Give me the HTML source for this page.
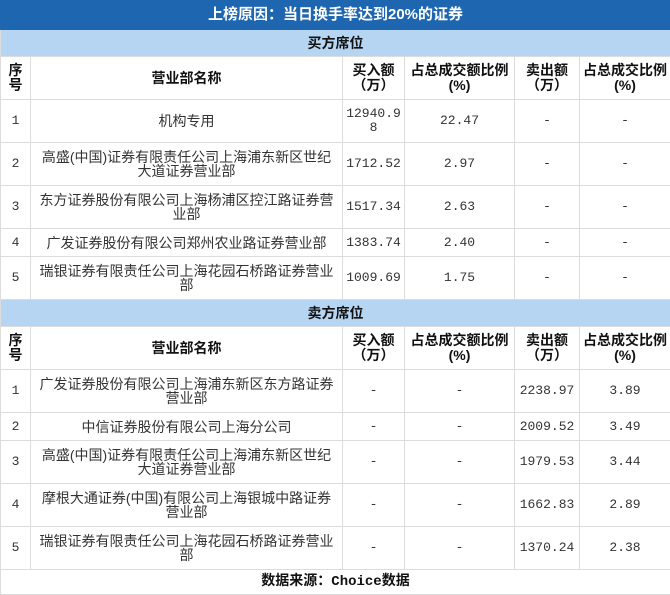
<!DOCTYPE html>
<html><head><meta charset="utf-8"><style>
body{margin:0;background:#fff;}
table{border-collapse:collapse;table-layout:fixed;width:670px;font-family:"Liberation Mono","Noto Serif CJK SC",monospace;font-size:13px;color:#333;}
td{border:1px solid #dcdcdc;text-align:center;padding:0 1px;line-height:14px;overflow:hidden;word-break:break-all;}
.t{background:#1e66b0;color:#fff;font-weight:bold;font-size:15px;font-family:"Liberation Sans","Noto Sans CJK SC",sans-serif;height:28px;border-color:#1e66b0;}
.s{background:#b6d5f2;font-weight:bold;font-size:14px;height:26px;font-family:"Liberation Sans","Noto Sans CJK SC",sans-serif;color:#111;}
.h td{font-weight:bold;font-size:14px;height:42px;font-family:"Liberation Sans","Noto Sans CJK SC",sans-serif;line-height:15px;color:#111;}
.n td:nth-child(2){font-family:"Liberation Sans","Noto Sans CJK SC",sans-serif;font-size:14px;padding:0 6px;}
.a{height:42px}.b{height:27px}
.f{font-weight:bold;height:24px;font-size:14px;font-family:"Liberation Mono","Noto Sans CJK SC",sans-serif;color:#111;}
</style></head><body>
<table>
<colgroup><col style="width:30px"><col style="width:312px"><col style="width:62px"><col style="width:110px"><col style="width:65px"><col style="width:91px"></colgroup>
<tr><td class="t" colspan="6">上榜原因：当日换手率达到20%的证券</td></tr>
<tr><td class="s" colspan="6">买方席位</td></tr>
<tr class="h"><td>序号</td><td>营业部名称</td><td>买入额（万）</td><td>占总成交额比例(%)</td><td>卖出额（万）</td><td>占总成交比例(%)</td></tr>
<tr class="n"><td class="a">1</td><td>机构专用</td><td>12940.98</td><td>22.47</td><td>-</td><td>-</td></tr>
<tr class="n"><td class="a">2</td><td>高盛(中国)证券有限责任公司上海浦东新区世纪大道证券营业部</td><td>1712.52</td><td>2.97</td><td>-</td><td>-</td></tr>
<tr class="n"><td class="a">3</td><td>东方证券股份有限公司上海杨浦区控江路证券营业部</td><td>1517.34</td><td>2.63</td><td>-</td><td>-</td></tr>
<tr class="n"><td class="b">4</td><td>广发证券股份有限公司郑州农业路证券营业部</td><td>1383.74</td><td>2.40</td><td>-</td><td>-</td></tr>
<tr class="n"><td class="a">5</td><td>瑞银证券有限责任公司上海花园石桥路证券营业部</td><td>1009.69</td><td>1.75</td><td>-</td><td>-</td></tr>
<tr><td class="s" colspan="6">卖方席位</td></tr>
<tr class="h"><td>序号</td><td>营业部名称</td><td>买入额（万）</td><td>占总成交额比例(%)</td><td>卖出额（万）</td><td>占总成交比例(%)</td></tr>
<tr class="n"><td class="a">1</td><td>广发证券股份有限公司上海浦东新区东方路证券营业部</td><td>-</td><td>-</td><td>2238.97</td><td>3.89</td></tr>
<tr class="n"><td class="b">2</td><td>中信证券股份有限公司上海分公司</td><td>-</td><td>-</td><td>2009.52</td><td>3.49</td></tr>
<tr class="n"><td class="a">3</td><td>高盛(中国)证券有限责任公司上海浦东新区世纪大道证券营业部</td><td>-</td><td>-</td><td>1979.53</td><td>3.44</td></tr>
<tr class="n"><td class="a">4</td><td>摩根大通证券(中国)有限公司上海银城中路证券营业部</td><td>-</td><td>-</td><td>1662.83</td><td>2.89</td></tr>
<tr class="n"><td class="a">5</td><td>瑞银证券有限责任公司上海花园石桥路证券营业部</td><td>-</td><td>-</td><td>1370.24</td><td>2.38</td></tr>
<tr><td class="f" colspan="6">数据来源：Choice数据</td></tr>
</table>
</body></html>
